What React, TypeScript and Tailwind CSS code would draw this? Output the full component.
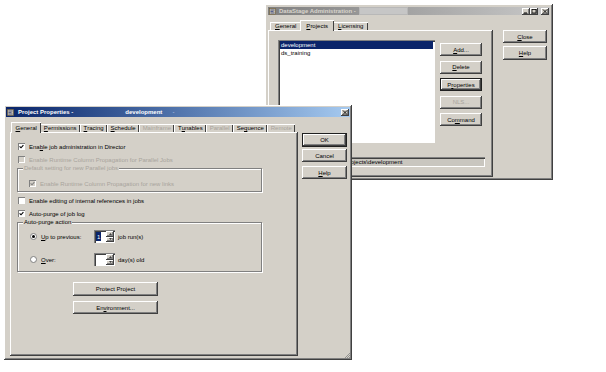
import React from "react";

const raised =
  "shadow-[inset_-1px_-1px_#404040,inset_1px_1px_#ffffff,inset_-2px_-2px_#808080]";
const sunken =
  "shadow-[inset_1px_1px_#808080,inset_2px_2px_#404040,inset_-1px_-1px_#ffffff]";
const disabledText = "text-[#a8a49c]";

function U({ children }: { children: React.ReactNode }) {
  return <span className="underline underline-offset-[1px]">{children}</span>;
}

function AppIcon() {
  return (
    <svg width="7" height="7" viewBox="0 0 7 7" className="shrink-0">
      <rect x="0.5" y="0.5" width="6" height="6" fill="#c8c0a8" stroke="#6b5a3a" strokeWidth="0.6" />
      <path d="M1.5 2h4M1.5 3.5h3M1.5 5h4" stroke="#3b4a8a" strokeWidth="0.8" />
    </svg>
  );
}

function TitleBtn({ kind }: { kind: "min" | "max" | "close" }) {
  return (
    <div className={`flex h-[7px] w-[8px] items-center justify-center bg-[#d4d0c8] ${raised}`}>
      <svg width="6" height="5" viewBox="0 0 6 5">
        {kind === "min" && <path d="M1 4h3" stroke="#000" strokeWidth="1" />}
        {kind === "max" && <rect x="1" y="0.5" width="4" height="3.5" fill="none" stroke="#000" strokeWidth="0.8" />}
        {kind === "close" && <path d="M1 0.5l4 4M5 0.5l-4 4" stroke="#000" strokeWidth="0.9" />}
      </svg>
    </div>
  );
}

function Btn({
  children,
  className = "",
  def = false,
  disabled = false,
}: {
  children: React.ReactNode;
  className?: string;
  def?: boolean;
  disabled?: boolean;
}) {
  return (
    <div
      className={`flex items-center justify-center bg-[#d4d0c8] ${raised} ${def ? "border border-[#202020]" : ""} ${
        disabled ? disabledText : "text-black"
      } ${className}`}
    >
      {children}
    </div>
  );
}

function Tab({
  children,
  sel = false,
  disabled = false,
  wide = false,
}: {
  children: React.ReactNode;
  sel?: boolean;
  disabled?: boolean;
  wide?: boolean;
}) {
  const pad = wide ? (sel ? "px-[6px]" : "px-[5px]") : sel ? "px-[4.5px]" : "px-[3.5px]";
  return (
    <div
      className={`relative flex items-center bg-[#d4d0c8] shadow-[inset_1px_1px_#ffffff,inset_-1px_0_#404040] ${pad} ${
        sel ? "z-10 -mx-[1px] -mb-[1px] h-[11px]" : "h-[8px]"
      } ${disabled ? disabledText : ""}`}
    >
      {children}
    </div>
  );
}

function Check({ checked = false, disabled = false }: { checked?: boolean; disabled?: boolean }) {
  return (
    <span
      className={`flex h-[7px] w-[7px] shrink-0 items-center justify-center ${disabled ? "bg-[#d4d0c8]" : "bg-white"} shadow-[inset_1px_1px_#808080,inset_-1px_-1px_#ffffff]`}
    >
      {checked && (
        <svg width="5" height="5" viewBox="0 0 5 5">
          <path d="M0.6 2.4 L2 3.8 L4.4 1.1" fill="none" stroke={disabled ? "#808080" : "#000"} strokeWidth="1.1" />
        </svg>
      )}
    </span>
  );
}

function CheckRow({
  children,
  checked,
  disabled,
  className = "",
}: {
  children: React.ReactNode;
  checked?: boolean;
  disabled?: boolean;
  className?: string;
}) {
  return (
    <div className={`flex h-[7px] items-center gap-[4px] ${className}`}>
      <Check checked={checked} disabled={disabled} />
      <span className={disabled ? disabledText : ""}>{children}</span>
    </div>
  );
}

function Radio({ on = false }: { on?: boolean }) {
  return (
    <span className="flex h-[7px] w-[7px] shrink-0 items-center justify-center rounded-full border border-[#808080] bg-white">
      {on && <span className="h-[3px] w-[3px] rounded-full bg-black" />}
    </span>
  );
}

function Group({
  label,
  disabled = false,
  className = "",
  children,
}: {
  label: string;
  disabled?: boolean;
  className?: string;
  children: React.ReactNode;
}) {
  return (
    <div className={`relative border border-[#808080] shadow-[1px_1px_0_#ffffff,inset_1px_1px_0_#ffffff] ${className}`}>
      <span className={`absolute -top-[4px] left-[5px] bg-[#d4d0c8] px-[1px] ${disabled ? disabledText : ""}`}>{label}</span>
      {children}
    </div>
  );
}

function Arrow({ up }: { up?: boolean }) {
  return (
    <div className={`flex flex-1 items-center justify-center bg-[#d4d0c8] ${raised}`}>
      <svg width="3" height="2" viewBox="0 0 3 2">
        <path d={up ? "M0 2h3L1.5 0z" : "M0 0h3L1.5 2z"} fill="#404040" />
      </svg>
    </div>
  );
}

function Spin({ value }: { value?: string }) {
  return (
    <div className={`flex h-[13px] w-[21px] bg-white p-[1px] ${sunken}`}>
      <div className="flex flex-1 items-center pl-[1px]">
        {value && <span className="flex h-[9px] items-center bg-[#0a246a] px-[1px] text-white">{value}</span>}
      </div>
      <div className="flex w-[8px] flex-col">
        <Arrow up />
        <Arrow />
      </div>
    </div>
  );
}

function AdminWindow() {
  return (
    <div className={`absolute left-[265px] top-[4px] flex h-[176px] w-[288px] flex-col bg-[#d4d0c8] p-[3px] ${raised}`}>
      <div className="flex h-[10px] items-center bg-gradient-to-r from-[#808080] to-[#c8c8c8] pl-[1px] pr-[1px]">
        <AppIcon />
        <span className="ml-[3px] font-bold text-[#d8d4cc]">DataStage Administration -</span>
        <span className="ml-[3px] h-[8px] w-[49px] border border-[#b8b8b8] bg-[#c6c6c6]" />
        <div className="ml-auto flex items-center">
          <TitleBtn kind="min" />
          <TitleBtn kind="max" />
          <div className="ml-[3px]">
            <TitleBtn kind="close" />
          </div>
        </div>
      </div>
      <div className="flex flex-1 pt-[5px]">
        <div className="flex w-[225px] flex-col">
          <div className="flex h-[10px] items-end pl-[2px]">
            <Tab wide>
              <U>G</U>eneral
            </Tab>
            <Tab wide sel>
              <U>P</U>rojects
            </Tab>
            <Tab wide>
              <U>L</U>icensing
            </Tab>
          </div>
          <div className={`flex flex-1 flex-col p-[10px] ${raised}`}>
            <div className="flex">
              <div className={`flex h-[103px] w-[157px] flex-col bg-white p-[2px] pt-[1px] ${sunken}`}>
                <div className="flex h-[8px] items-center bg-[#0a246a] pl-[1px] text-white">development</div>
                <div className="flex h-[8px] items-center pl-[1px]">ds_training</div>
              </div>
              <div className="ml-[5px] mt-[3px] flex w-[42px] flex-col gap-[4.5px]">
                <Btn className="h-[13px]">
                  <U>A</U>dd...
                </Btn>
                <Btn className="h-[13px]">
                  <U>D</U>elete
                </Btn>
                <Btn className="h-[13px]" def>
                  P<U>r</U>operties
                </Btn>
                <Btn className="h-[13px]" disabled>
                  NLS...
                </Btn>
                <Btn className="h-[13px]">
                  Co<U>m</U>mand
                </Btn>
              </div>
            </div>
            <div className={`mt-[14px] flex h-[10px] w-[207px] items-center bg-[#c9c6bf] pl-[3px] ${sunken}`}>
              C:\Ascential\DataStage\Projects\development
            </div>
          </div>
        </div>
        <div className="ml-[10px] mt-[10px] flex w-[44px] flex-col gap-[3px]">
          <Btn className="h-[13px]">
            <U>C</U>lose
          </Btn>
          <Btn className="h-[14px]">
            <U>H</U>elp
          </Btn>
        </div>
      </div>
    </div>
  );
}

function PropsWindow() {
  return (
    <div className={`absolute left-[4px] top-[105px] flex h-[255px] w-[348px] flex-col bg-[#d4d0c8] p-[2px] ${raised}`}>
      <div className="flex h-[10px] items-center bg-gradient-to-r from-[#0a246a] to-[#a6caf0] pl-[1px] pr-[1px]">
        <AppIcon />
        <span className="ml-[4px] font-bold text-white">Project Properties -</span>
        <span className="ml-[52px] font-bold text-white">development</span>
        <span className="ml-[10px] text-[#c8d8f0]">-</span>
        <div className="ml-auto">
          <TitleBtn kind="close" />
        </div>
      </div>
      <div className="relative flex flex-1 pb-[2px] pl-[4px] pt-[5px]">
        <div className="flex w-[288px] flex-col">
          <div className="flex h-[10px] items-end pl-[2px]">
            <Tab sel>
              <U>G</U>eneral
            </Tab>
            <Tab>
              <U>P</U>ermissions
            </Tab>
            <Tab>
              <U>T</U>racing
            </Tab>
            <Tab>
              <U>S</U>chedule
            </Tab>
            <Tab disabled>Mainframe</Tab>
            <Tab>
              T<U>u</U>nables
            </Tab>
            <Tab disabled>Parallel</Tab>
            <Tab>
              Se<U>q</U>uence
            </Tab>
            <Tab disabled>Remote</Tab>
          </div>
          <div className={`flex flex-1 flex-col pl-[8px] pt-[11px] ${raised}`}>
            <CheckRow checked>
              Ena<U>b</U>le job administration in Director
            </CheckRow>
            <CheckRow disabled className="mt-[6px]">
              Enable Runtime Column Propagation for Parallel Jobs
            </CheckRow>
            <Group label="Default setting for new Parallel jobs" disabled className="ml-[-1px] mt-[5px] h-[24px] w-[245px]">
              <div className="pl-[11px] pt-[11px]">
                <CheckRow checked disabled>
                  Enable Runtime Column Propagation for new links
                </CheckRow>
              </div>
            </Group>
            <CheckRow className="mt-[5px]">Enable editing of internal references in jobs</CheckRow>
            <CheckRow checked className="mt-[6px]">
              Auto-purge of job log
            </CheckRow>
            <Group label="Auto-purge action" className="ml-[-1px] mt-[5px] h-[50px] w-[245px]">
              <div className="flex flex-col gap-[10px] pl-[12px] pt-[7px]">
                <div className="flex items-center">
                  <div className="flex w-[64px] items-center gap-[4px]">
                    <Radio on />
                    <span>
                      <U>U</U>p to previous:
                    </span>
                  </div>
                  <Spin value="1" />
                  <span className="ml-[3px]">job run(s)</span>
                </div>
                <div className="flex items-center">
                  <div className="flex w-[64px] items-center gap-[4px]">
                    <Radio />
                    <span>
                      <U>O</U>ver:
                    </span>
                  </div>
                  <Spin />
                  <span className="ml-[3px]">day(s) old</span>
                </div>
              </div>
            </Group>
            <Btn className="ml-[55px] mt-[10px] h-[14px] w-[85px]">Protect Project</Btn>
            <Btn className="ml-[55px] mt-[5px] h-[13px] w-[85px]">
              En<U>v</U>ironment...
            </Btn>
          </div>
        </div>
        <div className="ml-[4px] mt-[11px] flex w-[45px] flex-col">
          <Btn className="h-[14px]" def>
            OK
          </Btn>
          <Btn className="mt-[2px] h-[13px]">Cancel</Btn>
          <Btn className="mt-[4px] h-[13px]">
            <U>H</U>elp
          </Btn>
        </div>
        <svg width="6" height="6" viewBox="0 0 6 6" className="absolute bottom-0 right-0">
          <path d="M6 1L1 6M6 3L3 6M6 5L5 6" stroke="#808080" strokeWidth="0.8" />
        </svg>
      </div>
    </div>
  );
}

export default function App() {
  return (
    <div className="relative h-[372px] w-[606px] overflow-hidden bg-white font-['Liberation_Sans',Arial,sans-serif] text-[6px] leading-none text-black">
      <AdminWindow />
      <PropsWindow />
    </div>
  );
}
